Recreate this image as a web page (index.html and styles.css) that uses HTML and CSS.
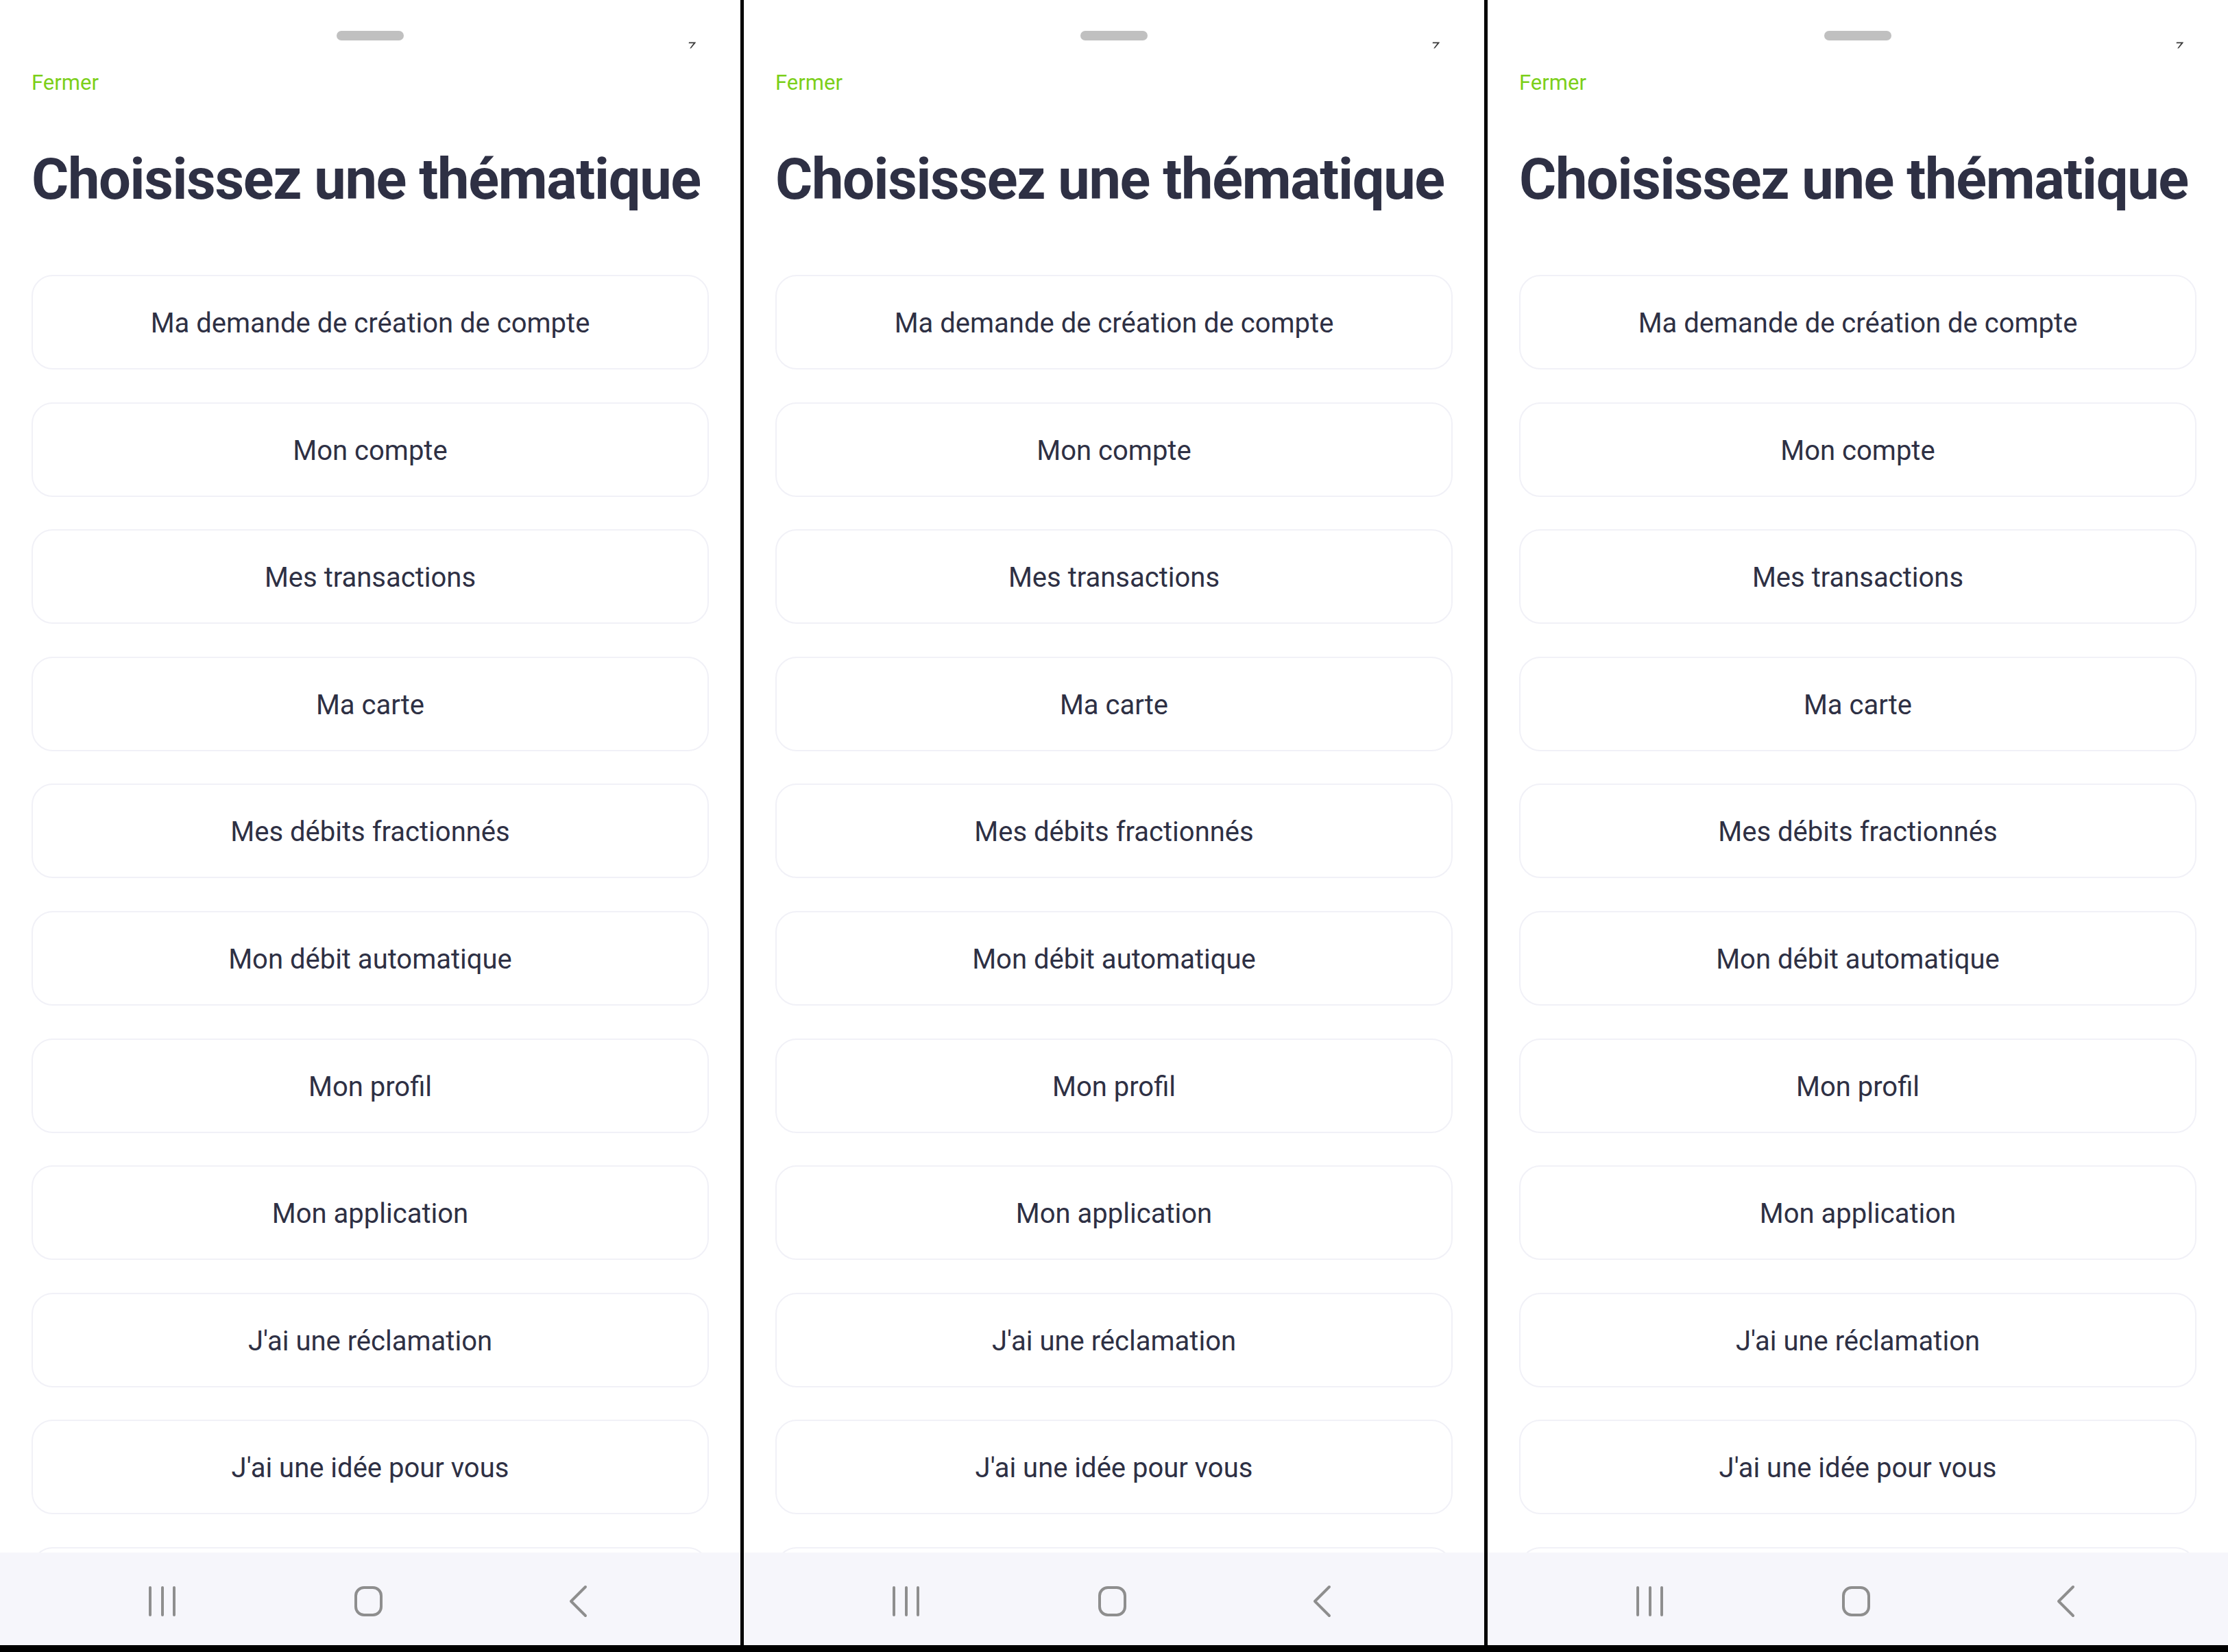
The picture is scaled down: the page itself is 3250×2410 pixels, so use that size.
FILE: index.html
```html
<!DOCTYPE html>
<html lang="fr">
<head>
<meta charset="utf-8">
<title>Choisissez une thématique</title>
<link rel="stylesheet" href="styles.css">
</head>
<body>
<div class="screens">
  <section class="panel">
    <div class="content">
      <div class="sheet-head">
        <div class="handle"></div>
        <svg class="mark" width="12" height="10" viewBox="0 0 12 10"><path d="M1 0.5 L11 0.5 L10.5 1.8 L4 9.5 L2.2 9.5 L7.6 2.2 L0.6 2.2 Z" fill="#3a3a3a"/></svg>
      </div>
      <a class="close">Fermer</a>
      <h1 class="title">Choisissez une thématique</h1>
      <ul class="topics">
        <li class="topic">Ma demande de création de compte</li>
        <li class="topic">Mon compte</li>
        <li class="topic">Mes transactions</li>
        <li class="topic">Ma carte</li>
        <li class="topic">Mes débits fractionnés</li>
        <li class="topic">Mon débit automatique</li>
        <li class="topic">Mon profil</li>
        <li class="topic">Mon application</li>
        <li class="topic">J'ai une réclamation</li>
        <li class="topic">J'ai une idée pour vous</li>
        <li class="topic" aria-hidden="true"></li>
      </ul>
    </div>
    <nav class="navbar">
      <svg class="nav-recents" width="40" height="46" viewBox="0 0 40 46"><g stroke="#8e8e8e" stroke-width="4" stroke-linecap="round"><line x1="2" y1="3" x2="2" y2="43"/><line x1="20" y1="3" x2="20" y2="43"/><line x1="37" y1="3" x2="37" y2="43"/></g></svg>
      <svg class="nav-home" width="46" height="48" viewBox="0 0 46 48"><rect x="4" y="4" width="37" height="40" rx="12" fill="none" stroke="#8e8e8e" stroke-width="4"/></svg>
      <svg class="nav-back" width="30" height="48" viewBox="0 0 30 48"><polyline points="25,3 4,24 25,45" fill="none" stroke="#8e8e8e" stroke-width="4" stroke-linecap="round" stroke-linejoin="round"/></svg>
    </nav>
  </section>
  <section class="panel">
    <div class="content">
      <div class="sheet-head">
        <div class="handle"></div>
        <svg class="mark" width="12" height="10" viewBox="0 0 12 10"><path d="M1 0.5 L11 0.5 L10.5 1.8 L4 9.5 L2.2 9.5 L7.6 2.2 L0.6 2.2 Z" fill="#3a3a3a"/></svg>
      </div>
      <a class="close">Fermer</a>
      <h1 class="title">Choisissez une thématique</h1>
      <ul class="topics">
        <li class="topic">Ma demande de création de compte</li>
        <li class="topic">Mon compte</li>
        <li class="topic">Mes transactions</li>
        <li class="topic">Ma carte</li>
        <li class="topic">Mes débits fractionnés</li>
        <li class="topic">Mon débit automatique</li>
        <li class="topic">Mon profil</li>
        <li class="topic">Mon application</li>
        <li class="topic">J'ai une réclamation</li>
        <li class="topic">J'ai une idée pour vous</li>
        <li class="topic" aria-hidden="true"></li>
      </ul>
    </div>
    <nav class="navbar">
      <svg class="nav-recents" width="40" height="46" viewBox="0 0 40 46"><g stroke="#8e8e8e" stroke-width="4" stroke-linecap="round"><line x1="2" y1="3" x2="2" y2="43"/><line x1="20" y1="3" x2="20" y2="43"/><line x1="37" y1="3" x2="37" y2="43"/></g></svg>
      <svg class="nav-home" width="46" height="48" viewBox="0 0 46 48"><rect x="4" y="4" width="37" height="40" rx="12" fill="none" stroke="#8e8e8e" stroke-width="4"/></svg>
      <svg class="nav-back" width="30" height="48" viewBox="0 0 30 48"><polyline points="25,3 4,24 25,45" fill="none" stroke="#8e8e8e" stroke-width="4" stroke-linecap="round" stroke-linejoin="round"/></svg>
    </nav>
  </section>
  <section class="panel">
    <div class="content">
      <div class="sheet-head">
        <div class="handle"></div>
        <svg class="mark" width="12" height="10" viewBox="0 0 12 10"><path d="M1 0.5 L11 0.5 L10.5 1.8 L4 9.5 L2.2 9.5 L7.6 2.2 L0.6 2.2 Z" fill="#3a3a3a"/></svg>
      </div>
      <a class="close">Fermer</a>
      <h1 class="title">Choisissez une thématique</h1>
      <ul class="topics">
        <li class="topic">Ma demande de création de compte</li>
        <li class="topic">Mon compte</li>
        <li class="topic">Mes transactions</li>
        <li class="topic">Ma carte</li>
        <li class="topic">Mes débits fractionnés</li>
        <li class="topic">Mon débit automatique</li>
        <li class="topic">Mon profil</li>
        <li class="topic">Mon application</li>
        <li class="topic">J'ai une réclamation</li>
        <li class="topic">J'ai une idée pour vous</li>
        <li class="topic" aria-hidden="true"></li>
      </ul>
    </div>
    <nav class="navbar">
      <svg class="nav-recents" width="40" height="46" viewBox="0 0 40 46"><g stroke="#8e8e8e" stroke-width="4" stroke-linecap="round"><line x1="2" y1="3" x2="2" y2="43"/><line x1="20" y1="3" x2="20" y2="43"/><line x1="37" y1="3" x2="37" y2="43"/></g></svg>
      <svg class="nav-home" width="46" height="48" viewBox="0 0 46 48"><rect x="4" y="4" width="37" height="40" rx="12" fill="none" stroke="#8e8e8e" stroke-width="4"/></svg>
      <svg class="nav-back" width="30" height="48" viewBox="0 0 30 48"><polyline points="25,3 4,24 25,45" fill="none" stroke="#8e8e8e" stroke-width="4" stroke-linecap="round" stroke-linejoin="round"/></svg>
    </nav>
  </section>
</div>
</body>
</html>
```
FILE: styles.css
```css
* { box-sizing: border-box; }
html, body {
  margin: 0;
  padding: 0;
  background: #000;
}
body {
  width: 3250px;
  height: 2410px;
  overflow: hidden;
  font-family: Roboto, "Liberation Sans", Arial, sans-serif;
}
.screens {
  display: flex;
  gap: 5px;
  height: 2400px;
}
.panel {
  width: 1080px;
  height: 2400px;
  display: flex;
  flex-direction: column;
  background: #fff;
}
.content {
  flex: 1;
  overflow: hidden;
  padding: 0 46px;
  display: flex;
  flex-direction: column;
}
.sheet-head {
  position: relative;
  height: 59px;
  padding-top: 45px;
  display: flex;
  justify-content: center;
}
.handle {
  width: 98px;
  height: 14px;
  border-radius: 7px;
  background: #c0c0c0;
}
.mark {
  position: absolute;
  left: 958px;
  top: 61px;
}
.close {
  display: block;
  margin-top: 46px;
  font-size: 31px;
  line-height: 31px;
  height: 31px;
  color: #7ccf1a;
  font-weight: 400;
}
.title {
  margin: 84px 0 0;
  font-size: 83px;
  line-height: 83px;
  height: 83px;
  font-weight: 700;
  color: #2e3044;
  letter-spacing: -1.35px;
  white-space: nowrap;
}
.topics {
  list-style: none;
  margin: 98px 0 0;
  padding: 0;
  display: flex;
  flex-direction: column;
  gap: 47.6px;
}
.topic {
  flex: none;
  height: 138px;
  padding-top: 3px;
  border: 2px solid #f1f1f7;
  border-radius: 31px;
  display: flex;
  align-items: center;
  justify-content: center;
  font-size: 40px;
  color: #2e3044;
  white-space: nowrap;
}
.navbar {
  flex: none;
  height: 135px;
  background: #f6f6fb;
  display: flex;
  align-items: center;
  padding-top: 7px;
  padding-left: 217px;
}
.nav-recents { flex: none; }
.nav-home { flex: none; margin-left: 258px; }
.nav-back { flex: none; margin-left: 268px; }
```
